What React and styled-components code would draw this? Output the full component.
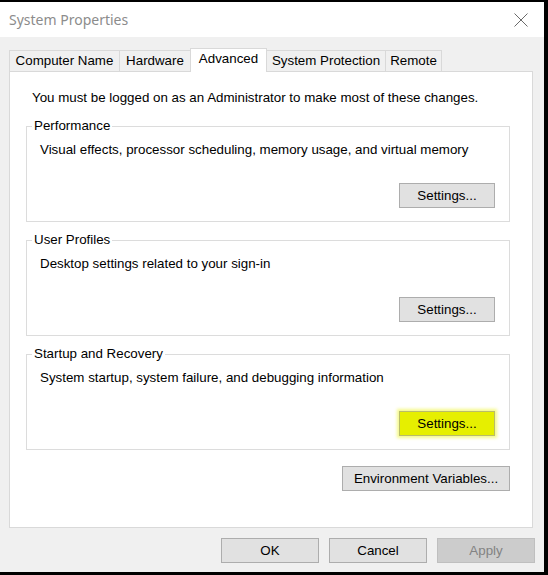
import React, { useState } from 'react';
import styled, { createGlobalStyle, css } from 'styled-components';

const GlobalStyle = createGlobalStyle`
  html, body {
    margin: 0;
    padding: 0;
    background: #000;
  }
  * {
    box-sizing: border-box;
  }
`;

const StyledWindow = styled.div`
  width: 548px;
  height: 575px;
  border-top: 2px solid #000;
  border-right: 4px solid #000;
  border-bottom: 3px solid #000;
  background: #f0f0f0;
  display: flex;
  flex-direction: column;
  font-family: 'Liberation Sans', Arial, sans-serif;
  font-size: 13.33px;
  color: #000;
`;

const StyledTitleBar = styled.div`
  height: 35px;
  flex-shrink: 0;
  background: #fff;
  display: flex;
  align-items: center;
  justify-content: space-between;
  padding: 0 15px 0 9px;
`;

const StyledTitle = styled.span`
  font-family: 'Noto Sans', 'Segoe UI', sans-serif;
  font-size: 14px;
  color: #8c8c8c;
`;

const StyledClose = styled.button`
  width: 16px;
  height: 16px;
  padding: 0;
  border: none;
  background: none;
  display: flex;
  align-items: center;
  justify-content: center;
`;

const StyledBody = styled.div`
  flex: 1;
  padding: 11px 11px 0 9px;
  display: flex;
  flex-direction: column;
`;

const StyledTabStrip = styled.div`
  height: 23px;
  display: flex;
  align-items: flex-end;
`;

const StyledTab = styled.div`
  width: ${({ width }) => width}px;
  height: 21px;
  margin-left: -1px;
  border: 1px solid #d9d9d9;
  border-bottom: none;
  background: #f0f0f0;
  display: flex;
  align-items: center;
  justify-content: center;
  padding-bottom: 1px;
  white-space: nowrap;

  &:first-child {
    margin-left: 0;
  }

  ${({ active }) =>
    active &&
    css`
      height: 24px;
      margin-bottom: -1px;
      background: #fff;
      position: relative;
      z-index: 1;
      padding-bottom: 4px;
    `}
`;

const StyledPanel = styled.div`
  height: 457px;
  background: #fff;
  border: 1px solid #d9d9d9;
  padding: 18px 22px 0 16px;
  display: flex;
  flex-direction: column;
`;

const StyledInfo = styled.p`
  margin: 0 0 12px 6px;
  line-height: 16px;
`;

const StyledGroup = styled.fieldset`
  margin: 0 0 10px;
  padding: 0 14px 13px 13px;
  border: 1px solid #dcdcdc;
  display: flex;
  flex-direction: column;
  min-width: 0;
`;

const StyledLegend = styled.legend`
  margin-left: -8px;
  padding: 0 2px;
  line-height: 16px;
`;

const StyledDescription = styled.p`
  margin: 8px 0 0;
  line-height: 16px;
`;

const StyledButton = styled.button`
  width: ${({ width }) => width || 96}px;
  height: 25px;
  padding: 0;
  border: 1px solid #adadad;
  background: #e1e1e1;
  font-family: 'Liberation Sans', Arial, sans-serif;
  font-size: 13.33px;
  color: #000;
  align-self: flex-end;

  ${({ highlighted }) =>
    highlighted &&
    css`
      background: #e6ef00;
      border-color: #b9bc6a;
      box-shadow: 0 0 3px 2px rgba(236, 244, 40, 0.55);
    `}

  ${({ disabled }) =>
    disabled &&
    css`
      background: #cccccc;
      border-color: #bfbfbf;
      color: #838383;
    `}
`;

const StyledSettings = styled(StyledButton)`
  margin-top: 25px;
`;

const StyledEnvButton = styled(StyledButton)`
  margin-top: 6px;
`;

const StyledFooter = styled.div`
  margin-top: 10px;
  margin-right: -2px;
  display: flex;
  justify-content: flex-end;
  gap: 10px;
`;

const tabs = [
  { label: 'Computer Name', width: 111 },
  { label: 'Hardware', width: 72 },
  { label: 'Advanced', width: 77 },
  { label: 'System Protection', width: 120 },
  { label: 'Remote', width: 57 },
];

const groups = [
  {
    id: 'performance',
    title: 'Performance',
    text: 'Visual effects, processor scheduling, memory usage, and virtual memory',
  },
  {
    id: 'profiles',
    title: 'User Profiles',
    text: 'Desktop settings related to your sign-in',
  },
  {
    id: 'startup',
    title: 'Startup and Recovery',
    text: 'System startup, system failure, and debugging information',
    highlighted: true,
  },
];

const CloseIcon = () => (
  <svg width="14" height="14" viewBox="0 0 14 14">
    <path d="M0.5 0.5 L13.5 13.5 M13.5 0.5 L0.5 13.5" stroke="#6a6a6a" strokeWidth="1" fill="none" />
  </svg>
);

const App = () => {
  const [activeTab, setActiveTab] = useState('Advanced');

  return (
    <>
      <GlobalStyle />
      <StyledWindow>
        <StyledTitleBar>
          <StyledTitle>System Properties</StyledTitle>
          <StyledClose aria-label="Close">
            <CloseIcon />
          </StyledClose>
        </StyledTitleBar>
        <StyledBody>
          <StyledTabStrip>
            {tabs.map(({ label, width }) => (
              <StyledTab
                key={label}
                width={width}
                active={label === activeTab}
                onClick={() => setActiveTab(label)}
              >
                {label}
              </StyledTab>
            ))}
          </StyledTabStrip>
          <StyledPanel>
            <StyledInfo>
              You must be logged on as an Administrator to make most of these changes.
            </StyledInfo>
            {groups.map(({ id, title, text, highlighted }) => (
              <StyledGroup key={id}>
                <StyledLegend>{title}</StyledLegend>
                <StyledDescription>{text}</StyledDescription>
                <StyledSettings highlighted={highlighted}>Settings...</StyledSettings>
              </StyledGroup>
            ))}
            <StyledEnvButton width={168}>Environment Variables...</StyledEnvButton>
          </StyledPanel>
          <StyledFooter>
            <StyledButton width={98}>OK</StyledButton>
            <StyledButton width={98}>Cancel</StyledButton>
            <StyledButton width={98} disabled>
              Apply
            </StyledButton>
          </StyledFooter>
        </StyledBody>
      </StyledWindow>
    </>
  );
};

export default App;
